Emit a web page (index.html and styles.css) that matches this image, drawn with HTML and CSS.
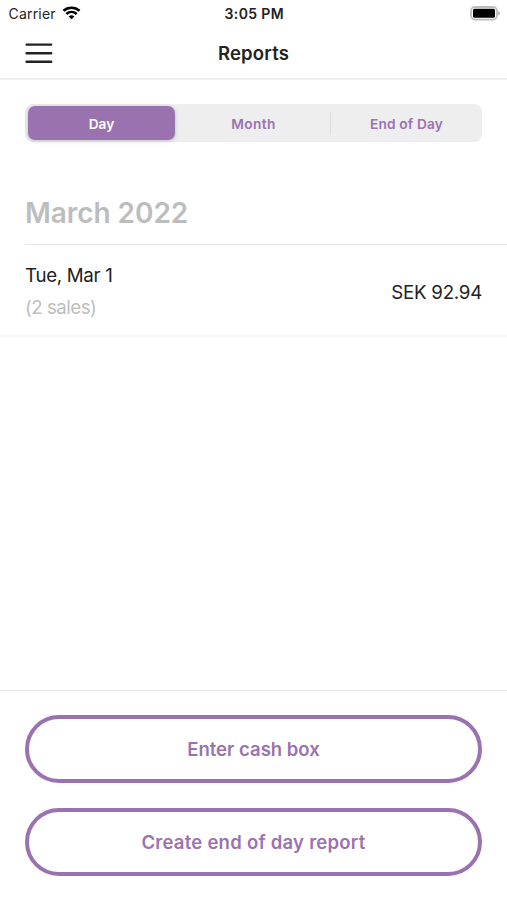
FILE: index.html
```html
<!DOCTYPE html>
<html lang="en">
<head>
<meta charset="utf-8">
<title>Reports</title>
<link rel="stylesheet" href="styles.css">
</head>
<body>
<div class="screen">
  <div class="status">
    <div class="network">
      <span class="carrier">Carrier</span>
      <svg class="wifi" width="19" height="15" viewBox="0 0 20 15" fill="none" stroke="#000" stroke-width="2.7">
        <path d="M1.500 5.700C6.300 1.400 13.700 1.400 18.500 5.700"/>
        <path d="M4.500 9C7.700 6.200 12.300 6.200 15.500 9"/>
        <path d="M7 11.600Q10 9.300 13 11.600L10 14.600Z" fill="#000" stroke="none"/>
      </svg>
    </div>
    <span class="time">3:05 PM</span>
    <svg class="battery" width="31" height="15" viewBox="0 0 31 15">
      <rect x="1" y="1" width="26" height="12.600" rx="4" fill="#fff" stroke="#bdbdbd" stroke-width="1.800"/>
      <rect x="3" y="2.800" width="22" height="9" rx="1.500" fill="#000"/>
      <path d="M28.300 4.800Q31.500 7.300 28.300 9.800Z" fill="#aaa"/>
    </svg>
  </div>
  <header class="header">
    <svg class="menu" width="28" height="21" viewBox="0 0 28 21" stroke="#222" stroke-width="2.400" stroke-linecap="round">
      <path d="M1.600 1.600H26.200M1.600 10.200H26.200M1.600 18.700H26.200"/>
    </svg>
    <h1 class="title"><span>Reports</span></h1>
  </header>
  <main class="content">
    <nav class="tabs">
      <div class="tab active"><span class="day">Day</span></div>
      <div class="tab"><span class="mon">Month</span></div>
      <div class="tab last"><span class="eod">End of Day</span></div>
    </nav>
    <h2 class="month"><span>March 2022</span></h2>
    <section class="row">
      <div class="details">
        <span class="date">Tue, Mar 1</span>
        <span class="sales">(2 sales)</span>
      </div>
      <span class="amount">SEK 92.94</span>
    </section>
  </main>
  <footer class="actions">
    <button class="button"><span class="cash">Enter cash box</span></button>
    <button class="button"><span class="create">Create end of day report</span></button>
  </footer>
</div>
</body>
</html>
```

FILE: styles.css
```css
* { box-sizing: border-box; }
body { margin: 0; background: #fff; color: #222; font-family: Inter, sans-serif; }
span { white-space: nowrap; }
.screen { width: 507px; height: 900px; display: flex; flex-direction: column; overflow: hidden; }
.status { height: 27px; display: grid; grid-template-columns: 1fr auto 1fr; padding: 0 7px 0 8.500px; }
.network { display: flex; }
.carrier { font-size: 14px; line-height: 28px; letter-spacing: .2px; }
.wifi { margin: 5px 0 0 6px; }
.time { font-size: 14px; line-height: 28px; font-weight: 600; letter-spacing: .35px; }
.battery { justify-self: end; margin: 6px -1px 0 0; }
.header { height: 53px; border-bottom: 2px solid #efefef; display: grid; grid-template-columns: 1fr auto 1fr; padding: 0 25px; }
.menu { margin-top: 16px; }
.title { margin: 0; font-size: 18.500px; line-height: 52px; font-weight: 600; letter-spacing: .2px; }
.content { flex: 1; }
.tabs { margin: 24px 25px 0; height: 38px; border-radius: 8px; background: #eee; display: grid; grid-template-columns: repeat(3, 1fr); padding: 2px; }
.tab { display: flex; align-items: center; justify-content: center; color: #9b72b0; font-size: 13.700px; font-weight: 600; line-height: 36px; height: 34px; }
.active { color: #fff; background: #9b72b0; border-radius: 7px; margin: 0 3px 0 1px; box-shadow: 0 1px 4px #0003; }
.tab span { padding-top: 1px; }
.mon { letter-spacing: .4px; }
.last { margin-left: 1px; padding-left: 3px; letter-spacing: .15px; background: linear-gradient(#dedede, #dedede) 0 center / 1px 23px no-repeat; }
.month { margin: 0 0 0 25px; height: 103px; padding-top: 52px; border-bottom: 1px solid #e6e6e6; color: #bcbebe; font-size: 28px; line-height: 38px; font-weight: 600; letter-spacing: -.05px; }
.row { height: 92px; padding: 15px 25px 0; border-bottom: 2px solid #f6f6f6; display: flex; justify-content: space-between; font-size: 18.700px; }
.details { display: flex; flex-direction: column; line-height: 32px; }
.date { letter-spacing: -.3px; }
.sales { color: #bcbebe; letter-spacing: -.5px; }
.amount { line-height: 66px; letter-spacing: -.25px; }
.actions { height: 210px; border-top: 1px solid #e6e6e6; padding: 23.500px 25px 0; display: flex; flex-direction: column; gap: 25px; }
.button { height: 68px; padding: 0; background: #fff; border: 4px solid #9b72b0; border-radius: 34px; color: #9b72b0; font: 600 18.500px/60px Inter, sans-serif; }
.create { letter-spacing: .25px; }
```
